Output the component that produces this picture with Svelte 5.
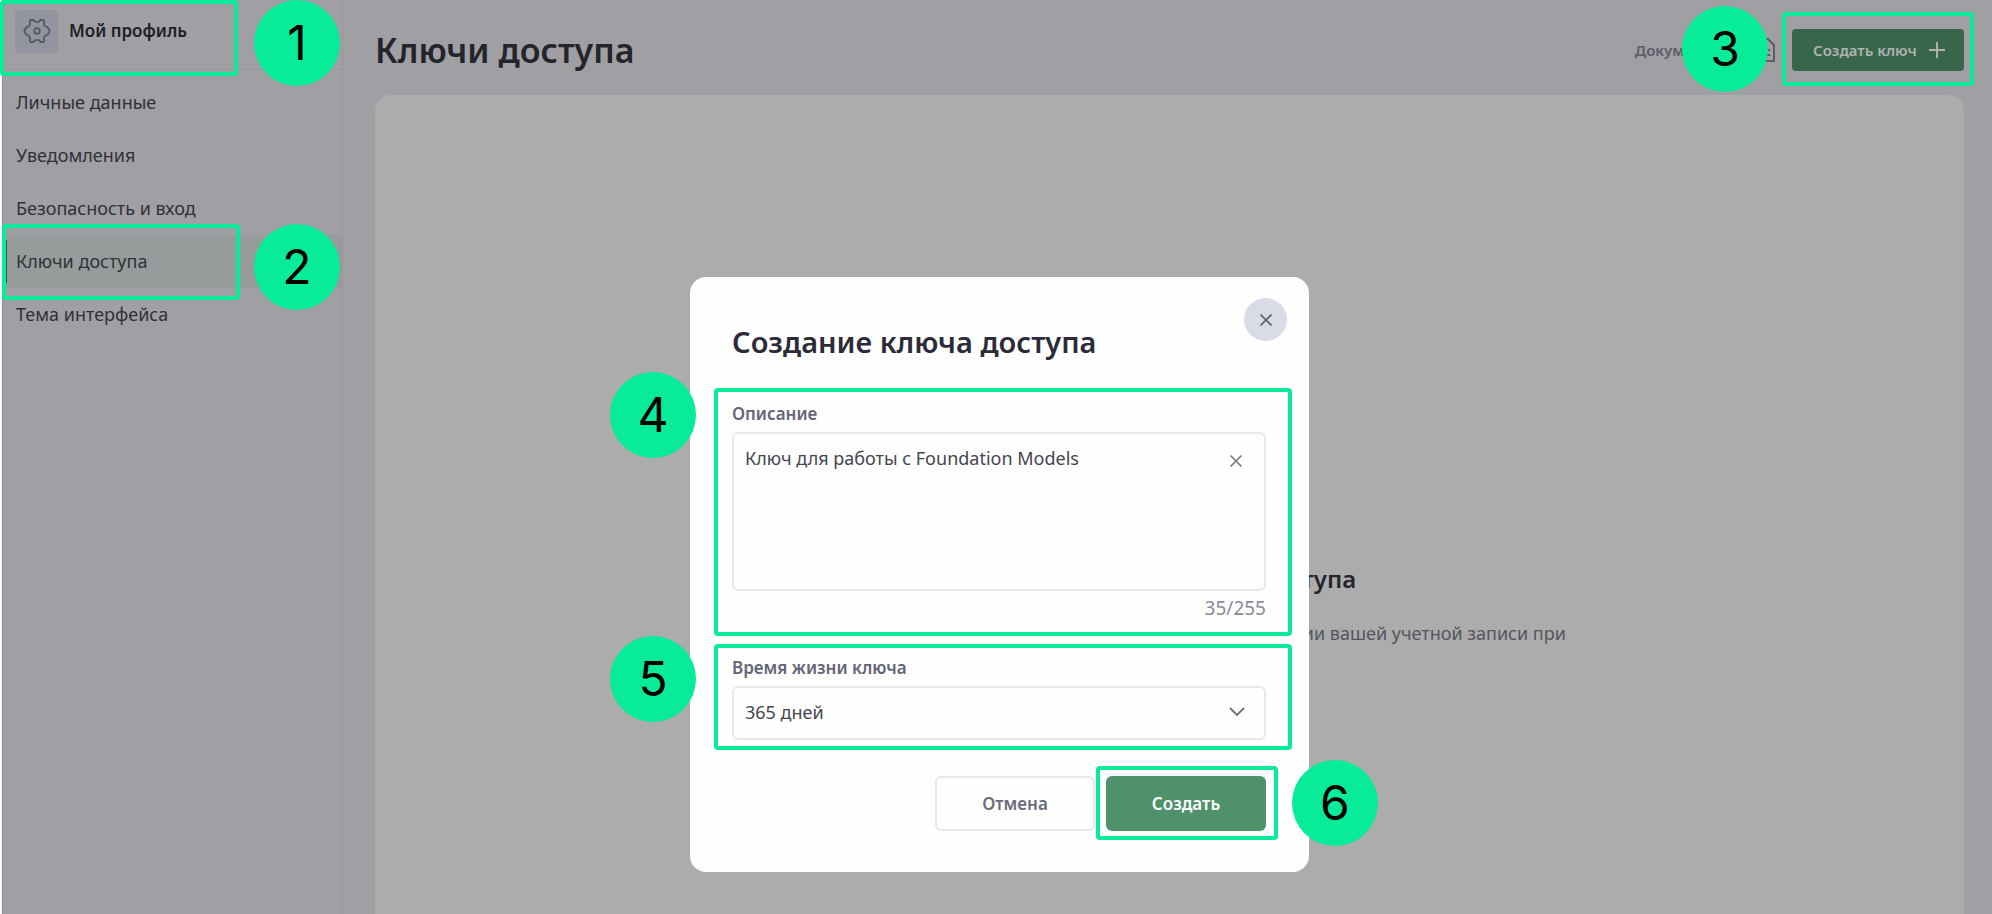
<script>
  // Access keys page with the "create key" dialog open and numbered steps on top.
  const nav = [
    { label: "Личные данные" },
    { label: "Уведомления" },
    { label: "Безопасность и вход" },
    { label: "Ключи доступа", active: true, step: 2 },
    { label: "Тема интерфейса" },
  ];

  const limit = 255;
  let description = $state("Ключ для работы с Foundation Models");
  let lifetime = $state("365");
</script>

{#snippet cross(size)}
  <svg width={size} height={size} viewBox="0 0 14 14" aria-hidden="true">
    <path d="M1.5 1.5l11 11M12.5 1.5l-11 11" fill="none" stroke="currentColor" stroke-width="1.7" />
  </svg>
{/snippet}

<div class="page">
  <aside class="sidebar">
    <div class="profile">
      <span class="tile">
        <svg width="28" height="28" viewBox="0 0 28 28" fill="none" stroke="currentColor" stroke-width="1.8" stroke-linejoin="round" aria-hidden="true">
          <path d="M8.200 3H10.200C11.200 3 11 4.800 12.500 4.800H15.500C17 4.800 16.800 3 17.800 3H19.800C21 3 21.400 4 21.200 5.300C20.600 6.500 21.200 8.600 22.500 9.400C23.600 10 24.500 9.700 25 10.800L26.400 13.200Q26.800 14 26.400 14.800L25 17.200C24.500 18.300 23.600 18 22.500 18.600C21.200 19.400 20.600 21.500 21.200 22.700C21.400 24 21 25 19.800 25H17.800C16.800 25 17 23.200 15.500 23.200H12.500C11 23.200 11.200 25 10.200 25H8.200C7 25 6.600 24 6.800 22.700C7.400 21.500 6.800 19.400 5.500 18.600C4.400 18 3.500 18.300 3 17.200L1.600 14.800Q1.200 14 1.600 13.200L3 10.800C3.500 9.700 4.400 10 5.500 9.400C6.800 8.600 7.400 6.500 6.800 5.300C6.600 4 7 3 8.200 3Z" />
          <circle cx="14" cy="14" r="2.8" />
        </svg>
      </span>
      <span class="profile-name">Мой профиль</span>
      <span class="frame frame-profile"></span>
      <span class="step step-nav">1</span>
    </div>
    <nav>
      {#each nav as item}
        <div class="nav-row" class:active={item.active}>
          <a href="#nav" aria-current={item.active ? "page" : undefined}>{item.label}</a>
          {#if item.step}
            <span class="frame frame-nav"></span>
            <span class="step step-nav step-row">{item.step}</span>
          {/if}
        </div>
      {/each}
    </nav>
  </aside>

  <main>
    <header>
      <h1>Ключи доступа</h1>
      <a class="docs" href="#docs">
        Документация
        <svg width="20" height="24" viewBox="0 0 20 24" fill="none" stroke="currentColor" stroke-width="2" aria-hidden="true">
          <path d="M1 1h12l6 6v16H1zM6 12h9M6 17h9" />
        </svg>
      </a>
      <div class="create-wrap">
        <button class="create-key" type="button">
          Создать ключ
          <svg width="16" height="16" viewBox="0 0 16 16" aria-hidden="true">
            <path d="M8 0v16M0 8h16" fill="none" stroke="currentColor" stroke-width="2" />
          </svg>
        </button>
        <span class="frame frame-create"></span>
        <span class="step step-create">3</span>
      </div>
    </header>
    <section class="panel">
      <h2>У вас пока нет ключей доступа</h2>
      <p>Ключи доступа используются для верификации и авторизации вашей учетной записи при<br />работе с API</p>
    </section>
  </main>

  <div class="backdrop">
    <div class="dialog" role="dialog" aria-modal="true" aria-labelledby="dialog-title">
      <button class="close" type="button" aria-label="Закрыть">{@render cross(14)}</button>
      <h2 id="dialog-title">Создание ключа доступа</h2>

      <div class="group group-description">
        <label for="description">Описание</label>
        <div class="control">
          <textarea id="description" maxlength={limit} bind:value={description}></textarea>
          <button class="clear" type="button" aria-label="Очистить" onclick={() => (description = "")}>{@render cross(14)}</button>
        </div>
        <div class="counter">{description.length}/{limit}</div>
        <span class="step step-description">4</span>
      </div>

      <div class="group">
        <label for="lifetime">Время жизни ключа</label>
        <div class="control">
          <select id="lifetime" bind:value={lifetime}>
            <option value="30">30 дней</option>
            <option value="365">365 дней</option>
          </select>
          <svg class="chevron" width="16" height="10" viewBox="0 0 16 10" aria-hidden="true">
            <path d="M1 1l7 7 7-7" fill="none" stroke="currentColor" stroke-width="1.8" />
          </svg>
        </div>
        <span class="step step-lifetime">5</span>
      </div>

      <div class="actions">
        <button class="cancel" type="button">Отмена</button>
        <div class="submit-wrap">
          <button class="submit" type="button">Создать</button>
          <span class="frame frame-submit"></span>
          <span class="step step-submit">6</span>
        </div>
      </div>
    </div>
  </div>
</div>

<style>
  :global(body) {
    margin: 0;
    background: #fff;
  }
  .page {
    --mark: #08eb99;
    --line: #e8e7ef;
    position: relative;
    display: flex;
    min-height: 100vh;
    margin-left: 2px;
    box-sizing: border-box;
    border-left: 1px solid #8d8c98;
    background: #a09fa4;
    color: #303037;
    font: 18px/24px "Noto Sans", "Open Sans", sans-serif;
  }
  .page * {
    box-sizing: border-box;
  }
  button,
  select,
  textarea {
    font: inherit;
    color: inherit;
  }
  button {
    padding: 0;
    border: 0;
    cursor: pointer;
  }
  a {
    color: inherit;
    text-decoration: none;
  }
  h1,
  h2,
  p {
    margin: 0;
  }
  svg {
    display: block;
    flex: none;
  }

  /* numbered steps and the frames around what they point at */
  .frame {
    position: absolute;
    border: 4px solid var(--mark);
    border-radius: 4px;
    pointer-events: none;
  }
  .step {
    position: absolute;
    display: grid;
    place-items: center;
    width: 86px;
    height: 86px;
    border-radius: 50%;
    background: var(--mark);
    color: #000;
    font: 400 48px/48px Inter, sans-serif;
  }

  .sidebar {
    flex: none;
    width: 340px;
    border-right: 1px solid #97969d;
  }
  .profile {
    position: relative;
    display: flex;
    align-items: center;
    gap: 11px;
    height: 70px;
    padding: 0 12px 7px;
    border-bottom: 1px solid #97969d;
  }
  .tile {
    display: grid;
    place-items: center;
    width: 43px;
    height: 43px;
    border-radius: 4px;
    background: #92959f;
    color: #555762;
  }
  .profile-name {
    color: #202026;
    font-size: 17px;
    font-weight: 600;
  }
  .frame-profile {
    top: 0;
    left: -3px;
    width: 238px;
    height: 76px;
  }
  .step-nav {
    top: 0;
    left: 251px;
  }
  .step-nav.step-row {
    top: -11px;
  }
  nav {
    padding-top: 6px;
  }
  .nav-row {
    position: relative;
  }
  .nav-row a {
    display: block;
    padding: 14px 13px 15px;
  }
  .nav-row.active {
    background: #969c9b;
  }
  .nav-row.active::before {
    content: "";
    position: absolute;
    top: 5px;
    left: 3px;
    width: 1px;
    height: 43px;
    background: #3c5548;
  }
  .frame-nav {
    top: -11px;
    left: -1px;
    width: 238px;
    height: 76px;
  }

  main {
    flex: 1;
    display: flex;
    flex-direction: column;
    padding: 0 28px 0 32px;
  }
  header {
    display: flex;
    align-items: center;
    height: 95px;
    padding-top: 5px;
  }
  h1 {
    flex: 1;
    color: #24242b;
    font-size: 34px;
    font-weight: 600;
    line-height: 44px;
  }
  .docs {
    display: flex;
    align-items: center;
    gap: 8px;
    margin-right: 17px;
    color: #5c5c68;
    font-size: 15px;
    font-weight: 600;
  }
  .create-wrap {
    position: relative;
  }
  .create-key {
    display: flex;
    align-items: center;
    justify-content: space-between;
    width: 172px;
    height: 42px;
    padding: 0 19px 0 21px;
    border-radius: 4px;
    background: #37664a;
    color: #aeb3b0;
    font-size: 15px;
    font-weight: 600;
  }
  .frame-create {
    inset: -17px -10px -15px;
  }
  .step-create {
    top: -23px;
    right: 196px;
  }
  .panel {
    flex: 1;
    display: flex;
    flex-direction: column;
    align-items: center;
    gap: 26px;
    padding-top: 468px;
    border-radius: 16px 16px 0 0;
    background: #acacac;
    text-align: center;
  }
  .panel h2 {
    color: #24242b;
    font-size: 24px;
    font-weight: 600;
    line-height: 32px;
  }
  .panel p {
    color: #55555f;
    white-space: nowrap;
  }

  .backdrop {
    position: absolute;
    inset: 0;
    display: flex;
    justify-content: center;
    align-items: flex-start;
    padding: 277px 0 0 4px;
    pointer-events: none;
  }
  .dialog {
    position: relative;
    display: flex;
    flex-direction: column;
    gap: 8px;
    width: 619px;
    padding: 45px 17px 41px 24px;
    border-radius: 16px;
    background: #fefefe;
    pointer-events: auto;
  }
  .dialog h2 {
    margin: 0 0 18px 18px;
    color: #2c2c38;
    font-size: 29px;
    font-weight: 600;
    line-height: 40px;
  }
  .close {
    position: absolute;
    top: 21px;
    right: 22px;
    display: grid;
    place-items: center;
    width: 43px;
    height: 43px;
    border-radius: 50%;
    background: #d9dbe7;
    color: #5a5c68;
  }
  .group {
    position: relative;
    padding: 8px 22px 6px 14px;
    border: 4px solid var(--mark);
    border-radius: 4px;
  }
  .group-description {
    padding-top: 10px;
  }
  .group label {
    display: block;
    margin-bottom: 6px;
    color: #646577;
    font-size: 17px;
    font-weight: 600;
  }
  .control {
    position: relative;
  }
  textarea,
  select {
    display: block;
    width: 100%;
    margin: 0;
    border: 2px solid var(--line);
    border-radius: 6px;
    background: transparent;
    color: #45454f;
    outline: none;
  }
  textarea {
    height: 159px;
    padding: 12px 60px 12px 11px;
    resize: none;
  }
  select {
    height: 54px;
    padding: 0 48px 2px 11px;
    appearance: none;
  }
  .clear {
    position: absolute;
    top: 17px;
    right: 18px;
    padding: 5px;
    background: none;
    color: #777987;
  }
  .chevron {
    position: absolute;
    top: 21px;
    right: 21px;
    color: #6c6e7c;
    pointer-events: none;
  }
  .counter {
    padding: 5px 0 6px;
    color: #8a8b98;
    font-size: 19px;
    text-align: right;
  }
  .step-description {
    top: -20px;
    left: -108px;
  }
  .step-lifetime {
    top: -12px;
    left: -108px;
  }
  .actions {
    display: flex;
    justify-content: flex-end;
    gap: 11px;
    padding: 18px 26px 0 0;
  }
  .submit-wrap {
    position: relative;
  }
  .cancel,
  .submit {
    width: 160px;
    height: 55px;
    border-radius: 6px;
    font-size: 17px;
    font-weight: 600;
  }
  .cancel {
    border: 2px solid var(--line);
    background: transparent;
    color: #6b6c7d;
  }
  .submit {
    background: #4e916a;
    color: #fff;
  }
  .frame-submit {
    inset: -10px -12px -9px -10px;
  }
  .step-submit {
    top: -16px;
    right: -112px;
  }
</style>
